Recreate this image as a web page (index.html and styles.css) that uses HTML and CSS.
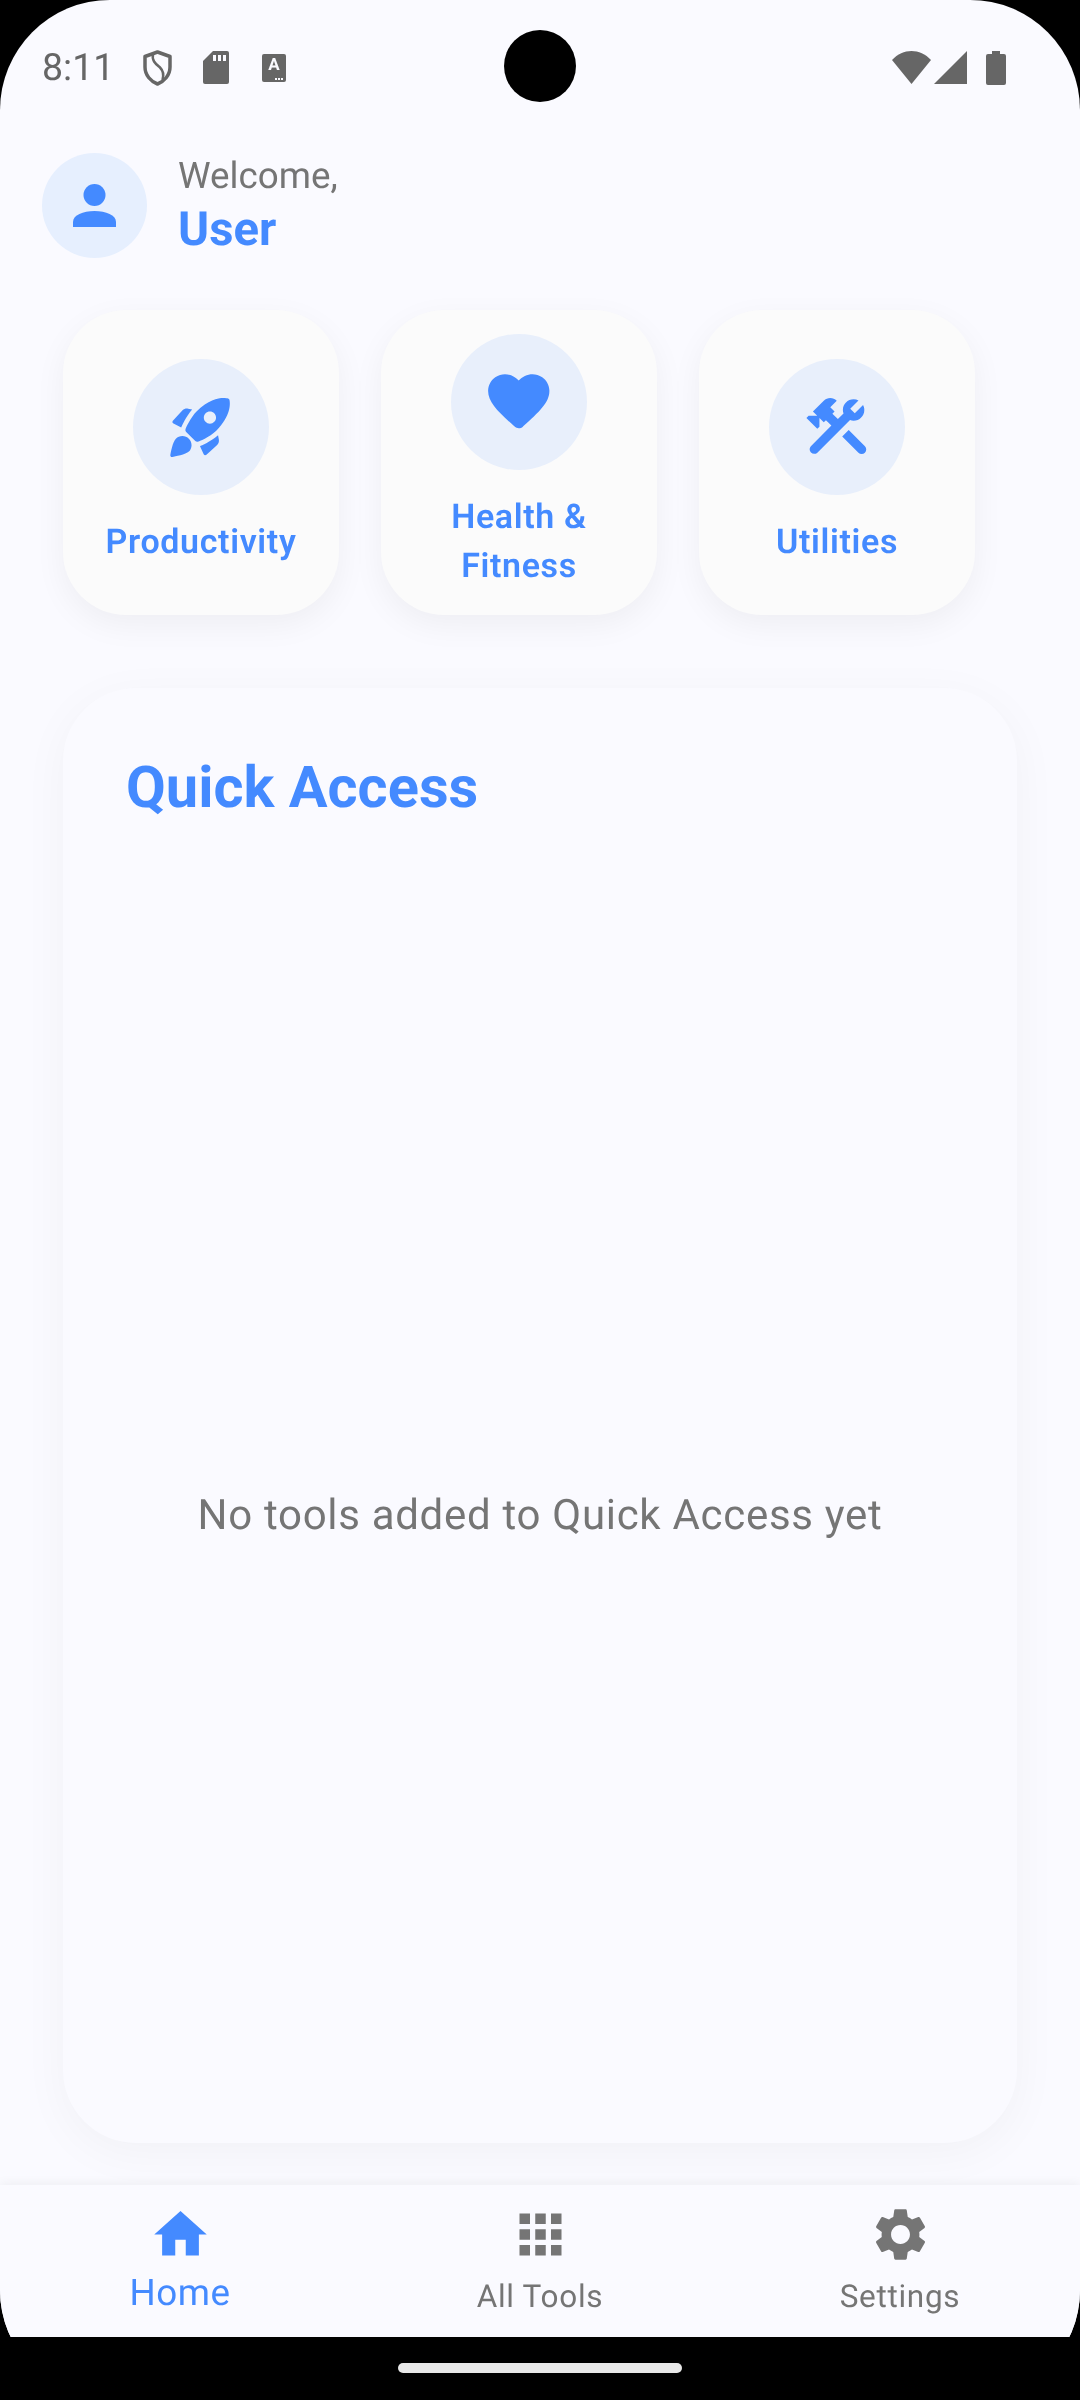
FILE: index.html
```html
<!DOCTYPE html>
<html lang="en">
<head>
    <meta charset="UTF-8">
    <meta name="viewport" content="width=device-width, initial-scale=1.0">
    <title>Home</title>
    <link rel="stylesheet" href="styles.css">
</head>
<body>
    <div class="display">
        <div class="screen">
            <div class="camera"></div>

            <div class="status-bar">
                <span class="time">8:11</span>
                <svg class="st-shield" viewBox="0 0 29 36">
                    <path class="st-line" d="M14.5 2 L27 6.5 V17 C27 25.5 21 31.5 14.5 34 C8 31.500 2 25.500 2 17 V6.500 Z"/>
                    <path class="st-line thin" d="M10 4 C8.500 11 13 14 17 17.500 C20.500 21 21 25 19.500 30"/>
                </svg>
                <svg class="st-sd" viewBox="0 0 26 33">
                    <path class="st-fill" d="M10 0 H24 a2 2 0 0 1 2 2 V31 a2 2 0 0 1 -2 2 H2 a2 2 0 0 1 -2 -2 V10 Z"/>
                    <rect class="st-cut" x="10" y="4" width="3" height="6"/>
                    <rect class="st-cut" x="15" y="4" width="3" height="6"/>
                    <rect class="st-cut" x="20" y="4" width="3" height="6"/>
                </svg>
                <div class="st-sim">
                    <span class="st-sim-letter">A</span>
                    <span class="st-sim-dots"><i></i><i></i><i></i></span>
                </div>
                <div class="st-spacer"></div>
                <svg class="st-wifi" viewBox="0 0 39 33">
                    <path class="st-fill" d="M0 9 C11 -3 28 -3 39 9 L19.500 33 Z"/>
                </svg>
                <svg class="st-signal" viewBox="0 0 33 33">
                    <path class="st-fill" d="M0 33 L33 0 V33 Z"/>
                </svg>
                <svg class="st-battery" viewBox="0 0 20 34">
                    <path class="st-fill" d="M6 0 H14 V3 H18 a2 2 0 0 1 2 2 V32 a2 2 0 0 1 -2 2 H2 a2 2 0 0 1 -2 -2 V5 a2 2 0 0 1 2 -2 H6 Z"/>
                </svg>
            </div>

            <div class="header">
                <div class="avatar">
                    <svg class="avatar-icon" viewBox="0 0 43 43">
                        <circle cx="21.500" cy="11" r="11"/>
                        <path d="M0 43 V38 C0 31 10 27 21.500 27 C33 27 43 31 43 38 V43 Z"/>
                    </svg>
                </div>
                <div class="welcome">
                    <div class="welcome-label">Welcome,</div>
                    <div class="welcome-name">User</div>
                </div>
            </div>

            <div class="categories">
                <div class="card">
                    <div class="card-circle">
                        <svg class="card-icon" viewBox="0 0 24 24"><path fill-rule="evenodd" d="M9.19 6.35c-2.04 2.29-3.44 5.58-3.57 5.89L3.100 10.950c-.4-.2-.45-.6-.2-.9l3.150-3.410c.47-.47 1.150-.68 1.810-.55L9.190 6.350zM11.200 16.850c0 0 3.710-1.400 5.860-3.550C21.960 8.400 21.660 4.400 21.360 3.200 21.300 2.960 21.160 2.820 20.920 2.760 19.720 2.460 15.600 2.040 10.700 6.940 8.550 9.090 7.200 12.350 7.050 12.700c-.14.34-.07.72.19.98l2.980 2.980c.26.26.64.33.98.19zM17.650 14.810c-2.290 2.040-5.580 3.440-5.890 3.570l1.200 2.600c.2.4.6.45.9.2l3.500-3.230c.47-.47.68-1.150.55-1.810L17.650 14.810zM9 18c0 .83-.34 1.580-.88 2.120-1 1-4.600 1.650-5.400 1.780-.4.06-.72-.26-.66-.66.13-.8.78-4.400 1.820-5.360C4.420 15.340 5.170 15 6 15 7.660 15 9 16.340 9 18zM13 9c0-1.100.9-2 2-2s2 .9 2 2-.9 2-2 2-2-.9-2-2z"/></svg>
                    </div>
                    <div class="card-label">Productivity</div>
                </div>
                <div class="card">
                    <div class="card-circle">
                        <svg class="card-icon" viewBox="0 0 24 24"><path d="M13.350 20.130c-.76.69-1.930.69-2.690-.01l-.11-.1C5.300 15.270 1.870 12.160 2 8.280c.06-1.700.93-3.330 2.340-4.290 2.640-1.800 5.900-.96 7.660 1.100 1.760-2.060 5.020-2.910 7.660-1.100 1.410.96 2.280 2.590 2.340 4.290.14 3.880-3.300 6.990-8.550 11.760l-.1.09z"/></svg>
                    </div>
                    <div class="card-label">Health &amp; Fitness</div>
                </div>
                <div class="card">
                    <div class="card-circle">
                        <svg class="card-icon" viewBox="0 0 24 24"><path d="M13.783 15.172l2.121-2.121 5.300 5.300a1.500 1.500 0 0 1-2.121 2.121zM17.500 10c1.930 0 3.500-1.570 3.500-3.500 0-.58-.16-1.120-.41-1.600l-2.700 2.700-1.490-1.490 2.700-2.700c-.48-.25-1.020-.41-1.600-.41C15.570 3 14 4.570 14 6.500c0 .41.080.8.210 1.160l-1.850 1.850-1.780-1.780.71-.71-1.410-1.410L12 3.490c-1.170-1.170-3.070-1.170-4.240 0L4.220 7.030l1.410 1.410H2.810l-.71.71 3.540 3.540.71-.71V9.150l1.410 1.410.71-.71 1.780 1.780-6.700 6.700a1.500 1.500 0 0 0 2.120 2.120L16.340 9.790c.36.130.75.210 1.160.210z"/></svg>
                    </div>
                    <div class="card-label">Utilities</div>
                </div>
            </div>

            <div class="panel">
                <div class="panel-title">Quick Access</div>
                <div class="panel-empty">No tools added to Quick Access yet</div>
            </div>

            <div class="nav">
                <div class="nav-item active">
                    <svg class="nav-icon" viewBox="0 0 24 24"><path d="M10 20v-6h4v6h5v-8h3L12 3 2 12h3v8z"/></svg>
                    <span class="nav-label">Home</span>
                </div>
                <div class="nav-item">
                    <svg class="nav-icon" viewBox="0 0 24 24"><path d="M4 8h4V4H4v4zm6 12h4v-4h-4v4zm-6 0h4v-4H4v4zm0-6h4v-4H4v4zm6 0h4v-4h-4v4zm6-10v4h4V4h-4zm-6 4h4V4h-4v4zm6 6h4v-4h-4v4zm0 6h4v-4h-4v4z"/></svg>
                    <span class="nav-label">All Tools</span>
                </div>
                <div class="nav-item">
                    <svg class="nav-icon" viewBox="0 0 24 24"><path d="M19.140 12.940c.04-.3.06-.61.06-.94 0-.32-.02-.64-.07-.94l2.030-1.580c.18-.14.23-.41.12-.61l-1.920-3.320c-.12-.22-.37-.29-.59-.22l-2.390.96c-.5-.38-1.030-.7-1.620-.94l-.36-2.540c-.04-.24-.24-.41-.48-.41h-3.840c-.24 0-.43.17-.47.41l-.36 2.540c-.59.24-1.130.57-1.620.94l-2.390-.96c-.22-.08-.47 0-.59.22L2.740 8.870c-.12.21-.08.47.12.61l2.030 1.580c-.05.3-.09.63-.09.94s.02.64.07.94l-2.030 1.580c-.18.14-.23.41-.12.61l1.920 3.320c.12.22.37.29.59.22l2.390-.96c.5.38 1.030.7 1.620.94l.36 2.540c.05.24.24.41.48.41h3.840c.24 0 .44-.17.47-.41l.36-2.540c.59-.24 1.130-.56 1.620-.94l2.390.96c.22.08.47 0 .59-.22l1.920-3.320c.12-.22.07-.47-.12-.61l-2.010-1.580zM12 15.600c-1.980 0-3.600-1.620-3.600-3.600s1.620-3.600 3.600-3.600 3.600 1.620 3.600 3.600-1.620 3.600-3.600 3.600z"/></svg>
                    <span class="nav-label">Settings</span>
                </div>
            </div>
        </div>
    </div>
    <div class="gesture-area">
        <div class="gesture-pill"></div>
    </div>
</body>
</html>
```

FILE: styles.css
```css
body {
    margin: 0;
    width: 1080px;
    height: 2400px;
    background: #000;
    font-family: Roboto, "Noto Sans", sans-serif;
    text-rendering: geometricPrecision;
    overflow: hidden;
}
.display {
    height: 2337px;
    overflow: hidden;
}
.screen {
    position: relative;
    display: flex;
    flex-direction: column;
    box-sizing: border-box;
    height: 2400px;
    padding-bottom: 63px;
    background: #fafaff;
    border-radius: 110px;
    overflow: hidden;
    will-change: transform;
}
.camera {
    position: absolute;
    left: 504px;
    top: 30px;
    width: 72px;
    height: 72px;
    border-radius: 50%;
    background: #000;
}

/* status bar */
.status-bar {
    display: flex;
    align-items: center;
    height: 135px;
    padding: 0 74px 0 42px;
}
.time {
    width: 101px;
    font-size: 37.500px;
    color: #666;
}
.st-fill {
    fill: #666;
}
.st-cut {
    fill: #fafaff;
}
.st-line {
    fill: none;
    stroke: #666;
    stroke-width: 3.500;
    stroke-linejoin: round;
}
.st-line.thin {
    stroke-width: 2.500;
}
.st-shield {
    width: 29px;
    height: 36px;
}
.st-sd {
    width: 26px;
    height: 33px;
    margin-left: 31px;
}
.st-sim {
    position: relative;
    width: 24px;
    height: 28px;
    margin-left: 33px;
    border-radius: 2px;
    background: #666;
    text-align: center;
}
.st-sim-letter {
    display: block;
    color: #fafaff;
    font-size: 17px;
    font-weight: 700;
    line-height: 23px;
}
.st-sim-dots {
    position: absolute;
    right: 3px;
    bottom: 2px;
    display: flex;
    gap: 1px;
}
.st-sim-dots i {
    width: 2px;
    height: 2px;
    background: #fafaff;
}
.st-spacer {
    flex: 1;
}
.st-wifi {
    width: 39px;
    height: 33px;
}
.st-signal {
    width: 33px;
    height: 33px;
    margin-left: 3px;
}
.st-battery {
    width: 20px;
    height: 34px;
    margin-left: 19px;
}

/* header */
.header {
    display: flex;
    align-items: center;
    gap: 31px;
    height: 105px;
    margin-top: 18px;
    padding-left: 42px;
}
.avatar {
    display: flex;
    align-items: center;
    justify-content: center;
    width: 105px;
    height: 105px;
    border-radius: 50%;
    background: #e6effe;
}
.avatar-icon {
    width: 43px;
    height: 43px;
    fill: #448aff;
}
.welcome-label {
    font-size: 36.750px;
    line-height: 44px;
    color: #757575;
}
.welcome-name {
    margin-top: 2px;
    font-size: 47.250px;
    font-weight: 700;
    line-height: 58px;
    color: #448aff;
}

/* category cards */
.categories {
    display: flex;
    gap: 42px;
    margin-top: 52px;
    padding-left: 63px;
}
.card {
    display: flex;
    flex-direction: column;
    align-items: center;
    justify-content: center;
    box-sizing: border-box;
    width: 276px;
    height: 305px;
    padding: 0 32px 1px;
    border-radius: 63px;
    background: #fbfbfb;
    box-shadow: 0 10px 32px rgba(0, 0, 0, 0.05);
}
.card-circle {
    display: flex;
    align-items: center;
    justify-content: center;
    flex: none;
    width: 136px;
    height: 136px;
    border-radius: 50%;
    background: #e8effb;
}
.card-icon {
    width: 73.500px;
    height: 73.500px;
    fill: #448aff;
}
.card-label {
    margin: 23px 0 -1px;
    font-size: 34px;
    font-weight: 600;
    letter-spacing: 0.650px;
    line-height: 49px;
    text-align: center;
    color: #448aff;
}

/* quick access */
.panel {
    display: flex;
    flex-direction: column;
    flex: 1;
    box-sizing: border-box;
    margin: 73px 63px 42px;
    padding: 63px;
    border-radius: 73px;
    background: #fafaff;
    box-shadow: 0 10px 48px rgba(0, 0, 0, 0.04);
}
.panel-title {
    margin-top: 1px;
    font-size: 57.750px;
    font-weight: 700;
    line-height: 72px;
    color: #448aff;
}
.panel-empty {
    display: flex;
    align-items: center;
    justify-content: center;
    flex: 1;
    margin-top: 126px;
    font-size: 42px;
    letter-spacing: 0.700px;
    color: #757575;
}

/* bottom nav */
.nav {
    display: flex;
    height: 152px;
    background: #fafaff;
    box-shadow: 0 -2px 10px rgba(0, 0, 0, 0.05);
}
.nav-item {
    display: flex;
    flex-direction: column;
    align-items: center;
    flex: 1;
    padding-top: 18px;
    color: #757575;
}
.nav-icon {
    width: 63px;
    height: 63px;
    fill: #757575;
}
.nav-label {
    margin-top: 11px;
    font-size: 31.500px;
    letter-spacing: 0.700px;
    line-height: 40px;
}
.nav-item.active {
    color: #448aff;
}
.nav-item.active .nav-icon {
    fill: #448aff;
}
.nav-item.active .nav-label {
    margin-top: 5px;
    font-size: 36.750px;
    letter-spacing: 0.500px;
    line-height: 44px;
}

/* gesture bar */
.gesture-area {
    display: flex;
    justify-content: center;
    padding-top: 26px;
}
.gesture-pill {
    width: 284px;
    height: 10px;
    border-radius: 5px;
    background: #e8e8e8;
}
```
